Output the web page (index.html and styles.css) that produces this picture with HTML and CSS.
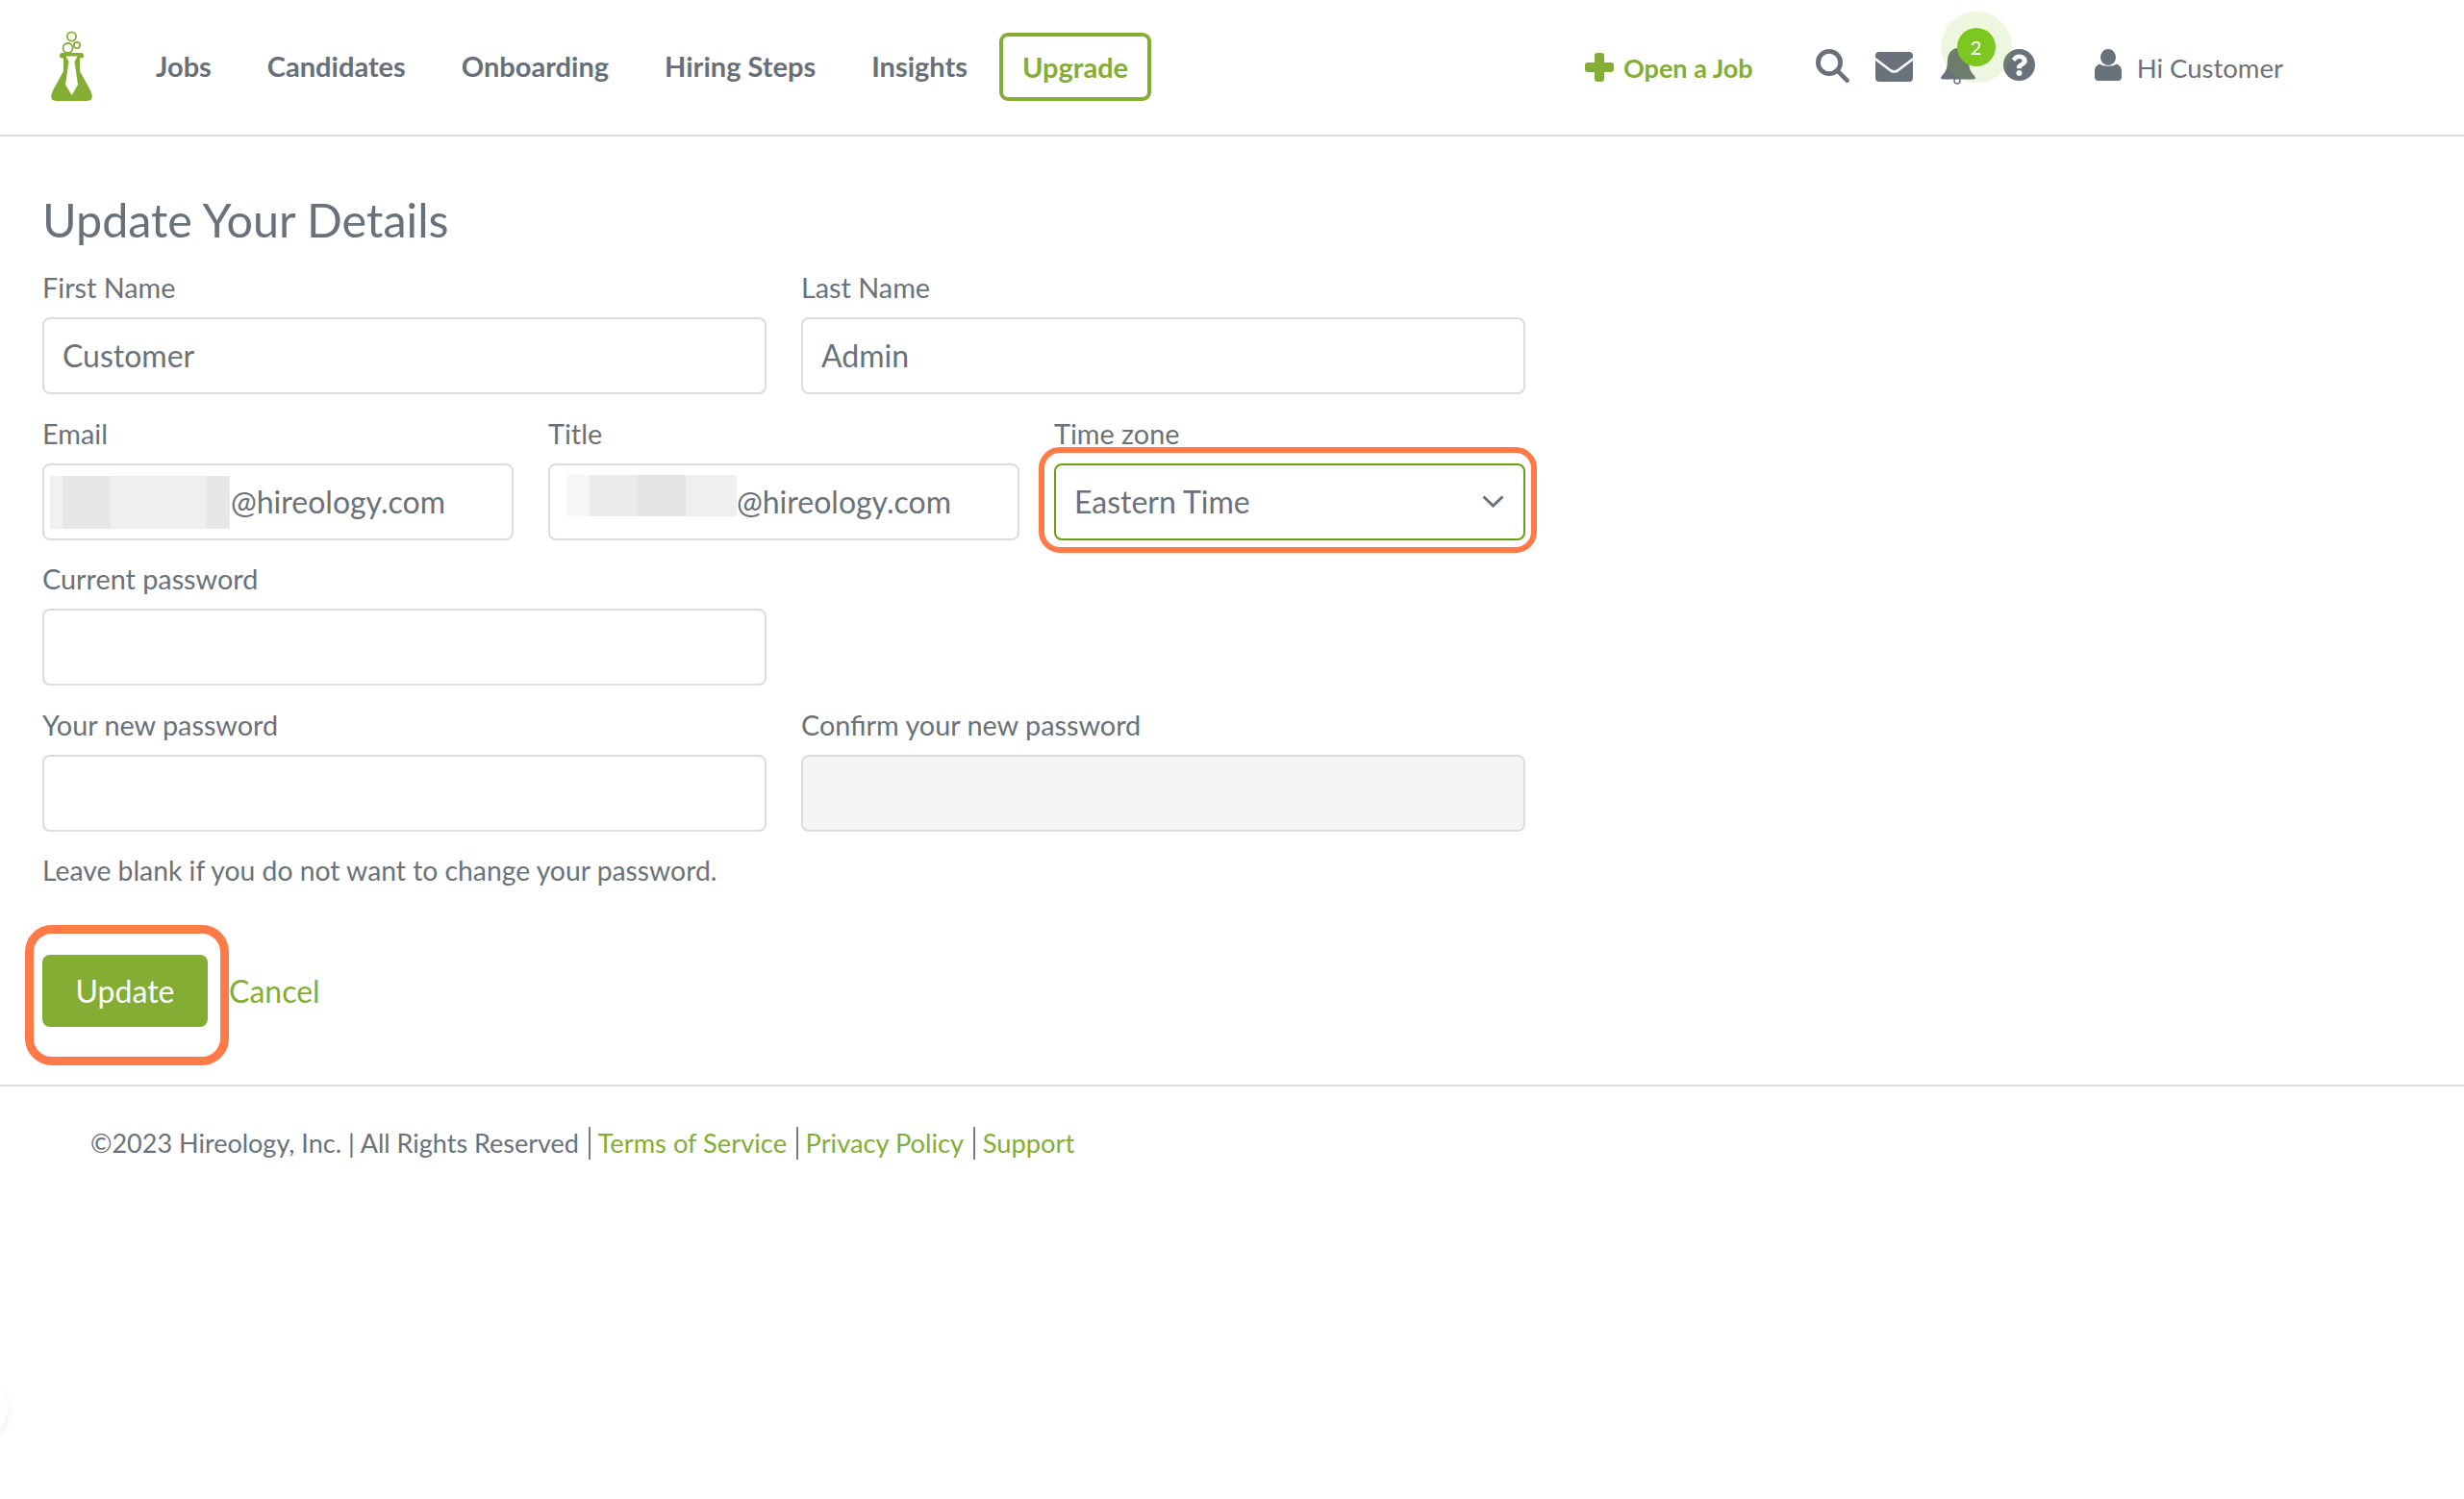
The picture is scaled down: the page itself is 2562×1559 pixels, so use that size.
FILE: index.html
```html
<!DOCTYPE html>
<html lang="en">
<head>
<meta charset="utf-8">
<title>Update Your Details</title>
<link rel="stylesheet" href="styles.css">
</head>
<body>
<header class="topbar">
  <div class="topbar-left">
    <svg class="logo" viewBox="0 0 90 100" width="90" height="100">
      <circle cx="44.5" cy="18" r="4.6" fill="none" stroke="#84ae33" stroke-width="1.8"/>
      <circle cx="40.5" cy="30" r="5" fill="none" stroke="#84ae33" stroke-width="1.8"/>
      <circle cx="50" cy="27" r="3.2" fill="none" stroke="#84ae33" stroke-width="1.8"/>
      <rect x="32" y="35" width="25" height="5.5" rx="2.5" fill="#84ae33"/>
      <path d="M36 39V54L25 74Q20 85 29 85H60Q69 85 64 74L53 54V39Z" fill="#84ae33"/>
      <path d="M38.500 38.500H50.500L47.500 44L51 68L44.700 79L38 68L41.500 44Z" fill="#fff"/>
    </svg>
    <nav class="mainnav">
      <a class="navlink">Jobs</a>
      <a class="navlink">Candidates</a>
      <a class="navlink">Onboarding</a>
      <a class="navlink">Hiring Steps</a>
      <a class="navlink">Insights</a>
    </nav>
    <a class="upgrade">Upgrade</a>
  </div>
  <div class="topbar-right">
    <a class="openjob">
      <svg viewBox="0 0 30 30" width="30" height="30"><path d="M10 3a3 3 0 0 1 3-3h4a3 3 0 0 1 3 3v7h7a3 3 0 0 1 3 3v4a3 3 0 0 1-3 3h-7v7a3 3 0 0 1-3 3h-4a3 3 0 0 1-3-3v-7H3a3 3 0 0 1-3-3v-4a3 3 0 0 1 3-3h7z" fill="#84ae33"/></svg>
      <span>Open a Job</span>
    </a>
    <svg class="ico-search" viewBox="0 0 36 36" width="36" height="36"><circle cx="15" cy="15" r="11.600" fill="none" stroke="#69727a" stroke-width="4.800"/><path d="M24 24l9.500 9.700" stroke="#69727a" stroke-width="4.600" stroke-linecap="round"/></svg>
    <svg class="ico-mail" viewBox="0 0 39 31" width="39" height="31"><rect width="39" height="31" rx="4" fill="#69727a"/><path d="M-1 6.500L16 19.500Q19.500 21.500 23 19.500L40 6.500" fill="none" stroke="#fff" stroke-width="2.600"/></svg>
    <div class="bell-wrap">
      <svg class="ico-bell" viewBox="0 0 36 38" width="36" height="38"><path d="M18 0c-6 0-11 5-11 13 0 9-3 13-6 16-1.500 1.500-1 3.500 1 3.500h32c2 0 2.500-2 1-3.500-3-3-6-7-6-16C29 5 24 0 18 0z" fill="#69727a"/><circle cx="17" cy="34" r="3" fill="none" stroke="#69727a" stroke-width="1.500"/></svg>
      <span class="halo"></span>
      <span class="badge">2</span>
    </div>
    <svg class="ico-help" viewBox="8 8 496 496" width="33" height="33"><path fill="#69727a" d="M504 256c0 136.997-111.043 248-248 248S8 392.997 8 256C8 119.083 119.043 8 256 8s248 111.083 248 248zM262.655 90c-54.497 0-89.255 22.957-116.549 63.758-3.536 5.286-2.353 12.415 2.715 16.258l34.699 26.310c5.205 3.947 12.621 3.008 16.665-2.122 17.864-22.658 30.113-35.797 57.303-35.797 20.429 0 45.698 13.148 45.698 32.958 0 14.976-12.363 22.667-32.534 33.976C247.128 238.528 216 254.941 216 296v4c0 6.627 5.373 12 12 12h56c6.627 0 12-5.373 12-12v-1.333c0-28.462 83.186-29.647 83.186-106.667 0-58.002-60.165-102-116.531-102zM256 338c-25.365 0-46 20.635-46 46 0 25.364 20.635 46 46 46s46-20.636 46-46c0-25.365-20.635-46-46-46z"/></svg>
    <a class="account">
      <svg viewBox="0 0 28 33" width="28" height="33"><ellipse cx="14" cy="8.500" rx="8" ry="8.500" fill="#69727a"/><path d="M5.500 15.500C8 18.500 20 18.500 22.500 15.500C26 16.500 28 19.500 28 23V29Q28 33 24 33H4Q0 33 0 29V23C0 19.500 2 16.500 5.500 15.500Z" fill="#69727a"/></svg>
      <span>Hi Customer</span>
    </a>
  </div>
</header>

<main class="content">
  <h1 class="title">Update Your Details</h1>
  <form class="form">
    <div class="row row-2">
      <div class="field"><label class="label">First Name</label><div class="input">Customer</div></div>
      <div class="field"><label class="label">Last Name</label><div class="input">Admin</div></div>
    </div>
    <div class="row row-3">
      <div class="field">
        <label class="label">Email</label>
        <div class="input input-redacted">
          <span class="redact redact-email"><i class="px e1"></i><i class="px e2"></i><i class="px e3"></i><i class="px e4"></i></span>@hireology.com
        </div>
      </div>
      <div class="field">
        <label class="label">Title</label>
        <div class="input input-redacted">
          <span class="redact redact-title"><i class="px t1"></i><i class="px t2"></i><i class="px t3"></i><i class="px t4"></i></span>@hireology.com
        </div>
      </div>
      <div class="field">
        <label class="label">Time zone</label>
        <div class="input select">
          <span>Eastern Time</span>
          <svg viewBox="0 0 23 13" width="23" height="13"><path d="M1.500 1.500L11.500 11L21.500 1.500" fill="none" stroke="#69727a" stroke-width="3"/></svg>
          <span class="mark mark-select"></span>
        </div>
      </div>
    </div>
    <div class="row row-2">
      <div class="field"><label class="label">Current password</label><div class="input"></div></div>
    </div>
    <div class="row row-2">
      <div class="field"><label class="label">Your new password</label><div class="input"></div></div>
      <div class="field"><label class="label">Confirm your new password</label><div class="input input-disabled"></div></div>
    </div>
    <p class="hint">Leave blank if you do not want to change your password.</p>
    <div class="actions">
      <button class="btn" type="button">Update<span class="mark mark-btn"></span></button>
      <a class="cancel">Cancel</a>
    </div>
  </form>
</main>

<footer class="footer">
  <span>©2023 Hireology, Inc. | All Rights Reserved</span>
  <a class="flink">Terms of Service</a>
  <a class="flink">Privacy Policy</a>
  <a class="flink">Support</a>
</footer>
<div class="edge-blob"></div>
</body>
</html>
```

FILE: styles.css
```css
* { box-sizing: border-box; }
html, body { margin: 0; padding: 0; height: 100%; overflow: hidden; background: #fff; }
body { font-family: Lato, "Open Sans", sans-serif; color: #69727a; font-size: 28px; position: relative; }

.topbar { height: 142px; border-bottom: 2px solid #dcdcdc; display: flex; justify-content: space-between; align-items: flex-start; padding-right: 188px; }
.topbar-left { display: flex; align-items: center; height: 138px; padding-left: 30px; }
.logo { flex: none; margin-top: 2px; }
.mainnav { display: flex; gap: 58px; margin-left: 42px; }
.navlink { font-size: 29px; font-weight: 700; color: #67707a; line-height: 40px; }
.upgrade { margin-left: 33px; height: 71px; width: 158px; border: 4px solid #84ae33; border-radius: 9px; color: #84ae33; font-size: 29px; font-weight: 700; display: flex; align-items: center; justify-content: center; }

.topbar-right { display: flex; align-items: flex-start; height: 140px; }
.openjob { display: flex; align-items: center; gap: 10px; color: #84ae33; font-weight: 700; font-size: 27px; margin-top: 52px; height: 36px; }
.ico-search { margin: 50px 0 0 64px; }
.ico-mail { margin: 54px 0 0 27px; }
.bell-wrap { position: relative; width: 36px; height: 38px; margin: 50px 0 0 29px; }
.ico-bell { display: block; }
.halo { position: absolute; left: 0; top: -38px; width: 74px; height: 74px; border-radius: 50%; background: rgba(125, 199, 35, 0.14); }
.badge { position: absolute; left: 17px; top: -21px; width: 40px; height: 40px; border-radius: 50%; background: #7dc723; color: #fff; font-size: 20px; display: flex; align-items: center; justify-content: center; }
.ico-help { margin: 51px 0 0 29px; }
.account { display: flex; align-items: center; gap: 16px; margin: 51px 0 0 62px; height: 33px; font-size: 27.500px; }
.account span { position: relative; top: 3px; }

.content { padding: 56px 0 0 44px; width: 1586px; }
.title { margin: 0 0 21px; font-size: 48.500px; line-height: 60px; font-weight: 400; color: #69727a; }
.form { display: flex; flex-direction: column; gap: 20.500px; }
.row { display: grid; gap: 36px; }
.row-2 { grid-template-columns: 1fr 1fr; }
.row-3 { grid-template-columns: 1fr 1fr 1fr; }
.label { display: block; font-size: 28.800px; line-height: 40px; margin-bottom: 11px; }
.input { height: 80px; border: 2px solid #dcdcdc; border-radius: 8px; padding: 0 19px 1px; font-size: 32px; display: flex; align-items: center; background: #fff; position: relative; }
.input-redacted { padding-left: 6px; }
.input-disabled { background: #f4f6f5; }
.select { border-color: #6a9f12; justify-content: space-between; padding-right: 20px; }

.redact { display: flex; flex: none; }
.redact-email { width: 187px; height: 55px; margin-top: 3px; margin-right: 1px; }
.redact-title { width: 177px; height: 43px; margin-top: -11px; margin-left: 11px; }
.px { display: block; height: 100%; }
.e1 { width: 13px; background: #f1f1f2; }
.e2 { width: 50px; background: #e6e7e8; }
.e3 { width: 99px; background: #eeeff0; }
.e4 { width: 25px; background: #e6e7e8; }
.t1 { width: 24px; background: #f6f6f6; }
.t2 { width: 50px; background: #eaebec; }
.t3 { width: 50px; background: #e3e4e5; }
.t4 { width: 53px; background: #eeeff0; }

.mark { position: absolute; border-style: solid; border-color: #ff7a47; pointer-events: none; }
.mark-select { left: -18px; top: -19px; width: 518px; height: 110px; border-width: 6px; border-radius: 22px; }
.mark-btn { left: -18px; top: -31px; width: 212px; height: 146px; border-width: 9px; border-radius: 28px; }

.hint { margin: 0; font-size: 28.300px; line-height: 40px; }
.actions { display: flex; align-items: center; gap: 22px; margin-top: 47px; }
.btn { position: relative; width: 172px; height: 75px; background: #84ae33; color: #fff; border: 0; border-radius: 8px; font-family: inherit; font-size: 32px; padding: 0; }
.cancel { color: #84ae33; font-size: 32px; }

.footer { margin-top: 60px; border-top: 2px solid #dcdcdc; padding: 42px 0 0 94px; display: flex; align-items: center; font-size: 27px; }
.footer > span { line-height: 34px; }
.flink { color: #84ae33; border-left: 2px solid #7d7d7d; margin-left: 10px; padding-left: 7.500px; line-height: 34px; font-size: 27.300px; }

.edge-blob { position: absolute; left: -50px; top: 1436px; width: 58px; height: 58px; border-radius: 50%; background: #fff; box-shadow: 0 3px 8px rgba(0, 0, 0, 0.08); }
```
